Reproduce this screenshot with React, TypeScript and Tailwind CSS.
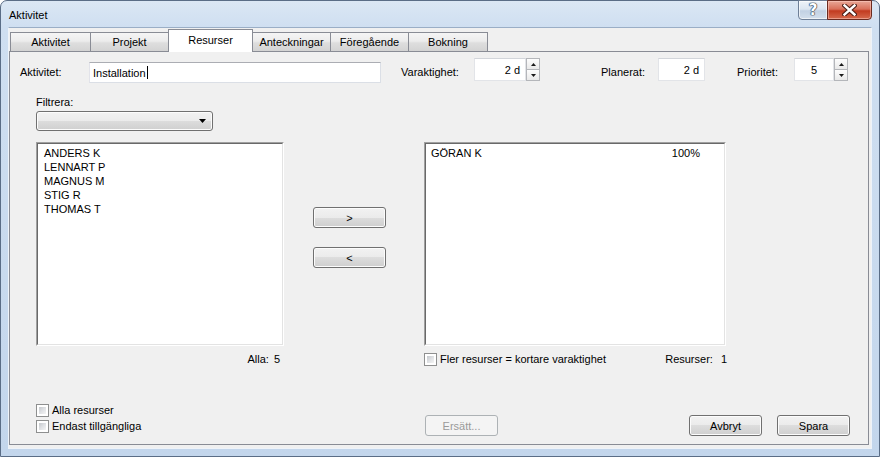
import React from "react";

function Btn({ children, disabled }: { children: React.ReactNode; disabled?: boolean }) {
  return (
    <div
      className={
        "flex h-[21px] w-[73px] items-center justify-center rounded-[3px] border leading-[14px] " +
        (disabled
          ? "border-[#adb2b5] bg-[#f4f4f4] text-[#9a9a9a]"
          : "border-[#707070] bg-[linear-gradient(to_bottom,#f2f2f2_0%,#ebebeb_50%,#dddddd_50%,#cfcfcf_100%)] shadow-[inset_0_0_0_1px_#fcfcfc] text-black")
      }
    >
      {children}
    </div>
  );
}

function Check() {
  return (
    <div className="h-[13px] w-[13px] shrink-0 border border-[#8e8f8f] bg-white p-[2px]">
      <div className="h-full w-full bg-[linear-gradient(135deg,#c5c8cc_0%,#dfe1e4_50%,#f4f4f4_100%)]" />
    </div>
  );
}

function Spinner() {
  return (
    <div className="flex h-[23px] w-[14px] flex-col">
      <div className="flex h-[12px] items-center justify-center border border-[#b4b6ba] bg-[linear-gradient(to_bottom,#fdfdfd,#e9e9e9)]">
        <svg width="5" height="3" viewBox="0 0 5 3">
          <path d="M0 3L2.5 0L5 3Z" fill="#1a1a1a" />
        </svg>
      </div>
      <div className="-mt-px flex h-[12px] items-center justify-center border border-[#b4b6ba] bg-[linear-gradient(to_bottom,#fdfdfd,#e9e9e9)]">
        <svg width="5" height="3" viewBox="0 0 5 3">
          <path d="M0 0L2.5 3L5 0Z" fill="#1a1a1a" />
        </svg>
      </div>
    </div>
  );
}

function NumBox({ value, width, center }: { value: string; width: string; center?: boolean }) {
  return (
    <div
      className={
        "flex h-[23px] items-center border border-[#e2e4e8] border-t-[#d2d5da] bg-white leading-[14px] " +
        width +
        (center ? " justify-center" : " justify-end pr-[5px]")
      }
    >
      {value}
    </div>
  );
}

function ListBox({ width, children }: { width: string; children?: React.ReactNode }) {
  return (
    <div className={"h-[204px] border border-[#a0a0a0] border-b-white border-r-white " + width}>
      <div className="h-full w-full border border-[#696969] border-b-[#e3e3e3] border-r-[#e3e3e3] bg-white pt-[2px]">
        {children}
      </div>
    </div>
  );
}

const tabBase = "flex items-center justify-center border border-b-0 border-[#898c95]";
const tabInactive =
  tabBase + " h-[19px] bg-[linear-gradient(to_bottom,#f5f5f5_0%,#ececec_45%,#dedede_55%,#d3d3d3_100%)] pt-[1px]";

export default function App() {
  return (
    <div className="h-[457px] w-[880px] overflow-hidden font-['Liberation_Sans',Arial,sans-serif] text-[11px] text-black">
      <div className="flex h-full w-full flex-col rounded-t-[7px] border border-[#5a6d86] bg-[linear-gradient(to_bottom,#dbe7f4_0px,#cfdff1_26px,#c3d6ec_100%)]">
        {/* Title bar */}
        <div className="flex h-[26px] items-start">
          <div className="self-center pl-[8px] pt-[2px] leading-[14px]">Aktivitet</div>
          <div className="ml-auto mr-[7px] -mt-px flex h-[20px]">
            <div className="flex h-full w-[30px] items-center justify-center rounded-bl-[4px] border border-[#6e7f97] bg-[linear-gradient(to_bottom,#eef3f9_0%,#dbe5f1_45%,#c2d1e3_55%,#d3dfec_100%)] shadow-[inset_0_0_0_1px_rgba(255,255,255,0.6)]">
              <span className="font-['DejaVu_Sans',sans-serif] text-[15px] font-bold leading-none text-white [text-shadow:0_0_1px_#2c3a4e,0_0_1px_#2c3a4e,0_0_1px_#2c3a4e,0_0_1px_#2c3a4e]">
                ?
              </span>
            </div>
            <div className="-ml-px flex h-full w-[45px] items-center justify-center rounded-br-[4px] border border-[#6b2b20] bg-[linear-gradient(to_bottom,#e9a797_0%,#d9705a_45%,#c23b20_55%,#d66a4d_100%)] shadow-[inset_0_0_0_1px_rgba(255,210,200,0.5)]">
              <svg width="15" height="12" viewBox="0 0 15 12">
                <path d="M2.5 1.5L12.5 10.5M12.5 1.5L2.5 10.5" stroke="#4a1d16" strokeWidth="4.5" strokeLinecap="square" />
                <path d="M2.5 1.5L12.5 10.5M12.5 1.5L2.5 10.5" stroke="#ffffff" strokeWidth="2.4" strokeLinecap="square" />
              </svg>
            </div>
          </div>
        </div>

        {/* Client */}
        <div className="mx-[7px] flex h-[422px] flex-col border border-[#eef3f9] border-t-[#9aaec6] bg-[#f0f0f0]">
          {/* Tabs */}
          <div className="flex h-[23px] items-end pl-[1px]">
            <div className={tabInactive + " w-[81px]"}>Aktivitet</div>
            <div className={tabInactive + " -ml-px w-[79px]"}>Projekt</div>
            <div className={tabBase + " relative z-10 -mb-px -ml-px h-[23px] w-[85px] bg-white pb-[1px]"}>Resurser</div>
            <div className={tabInactive + " -ml-px w-[79px]"}>Anteckningar</div>
            <div className={tabInactive + " -ml-px w-[79px]"}>Föregående</div>
            <div className={tabInactive + " -ml-px w-[80px]"}>Bokning</div>
          </div>

          {/* Panel */}
          <div className="flex h-[394px] w-[860px] flex-col border border-[#898c95] bg-[#f0f0f0]">
            {/* Row 1 */}
            <div className="mt-[6px] flex h-[25px] items-start pl-[10px]">
              <div className="mt-[7px] w-[69px] leading-[14px]">Aktivitet:</div>
              <div className="mt-[4px] flex h-[21px] w-[292px] items-center border border-[#dbdfe6] border-t-[#abadb3] border-l-[#e2e3ea] bg-white pl-[3px] leading-[14px]">
                Installation
                <span className="ml-px inline-block h-[13px] w-px bg-black" />
              </div>
              <div className="ml-[20px] mt-[7px] w-[73px] leading-[14px]">Varaktighet:</div>
              <NumBox value="2 d" width="w-[52px]" />
              <Spinner />
              <div className="ml-[61px] mt-[7px] w-[57px] leading-[14px]">Planerat:</div>
              <NumBox value="2 d" width="w-[47px]" />
              <div className="ml-[32px] mt-[7px] w-[57px] leading-[14px]">Prioritet:</div>
              <NumBox value="5" width="w-[40px]" center />
              <Spinner />
            </div>

            {/* Filter */}
            <div className="ml-[26px] mt-[12px] h-[14px] leading-[14px]">Filtrera:</div>
            <div className="ml-[26px] mt-[2px] flex h-[20px] w-[177px] items-center justify-end rounded-[3px] border border-[#707070] bg-[linear-gradient(to_bottom,#f2f2f2_0%,#ebebeb_50%,#dddddd_50%,#cfcfcf_100%)] pr-[6px] shadow-[inset_0_0_0_1px_#fcfcfc]">
              <svg width="7" height="4" viewBox="0 0 7 4">
                <path d="M0 0L7 0L3.5 4Z" fill="#000" />
              </svg>
            </div>

            {/* Lists */}
            <div className="ml-[26px] mt-[11px] flex h-[204px]">
              <ListBox width="w-[248px]">
                {["ANDERS K", "LENNART P", "MAGNUS M", "STIG R", "THOMAS T"].map((n) => (
                  <div key={n} className="h-[14px] pl-[6px] leading-[14px]">
                    {n}
                  </div>
                ))}
              </ListBox>
              <div className="flex w-[140px] flex-col pl-[29px]">
                <div className="mt-[65px]">
                  <Btn>&gt;</Btn>
                </div>
                <div className="mt-[19px]">
                  <Btn>&lt;</Btn>
                </div>
              </div>
              <ListBox width="w-[302px]">
                <div className="flex h-[14px] justify-between pl-[5px] pr-[24px] leading-[14px]">
                  <span>GÖRAN K</span>
                  <span>100%</span>
                </div>
              </ListBox>
            </div>

            {/* Row under lists */}
            <div className="ml-[26px] mt-[6px] flex h-[14px] items-center leading-[14px]">
              <div className="flex w-[248px] justify-end pr-[4px]">
                <span>Alla:</span>
                <span className="ml-[5px]">5</span>
              </div>
              <div className="w-[140px]" />
              <div className="flex w-[304px] items-center">
                <Check />
                <span className="ml-[3px]">Fler resurser = kortare varaktighet</span>
                <span className="ml-auto">Resurser:</span>
                <span className="ml-[8px] pr-[1px]">1</span>
              </div>
            </div>

            {/* Bottom */}
            <div className="mb-[8px] mt-auto flex items-end pl-[26px] pr-[18px]">
              <div className="flex w-[389px] flex-col pb-[2px] leading-[14px]">
                <div className="flex h-[16px] items-center">
                  <Check />
                  <span className="ml-[3px]">Alla resurser</span>
                </div>
                <div className="flex h-[16px] items-center">
                  <Check />
                  <span className="ml-[3px]">Endast tillgängliga</span>
                </div>
              </div>
              <Btn disabled>Ersätt...</Btn>
              <div className="flex-1" />
              <Btn>Avbryt</Btn>
              <div className="ml-[15px]">
                <Btn>Spara</Btn>
              </div>
            </div>
          </div>
        </div>
      </div>
    </div>
  );
}
